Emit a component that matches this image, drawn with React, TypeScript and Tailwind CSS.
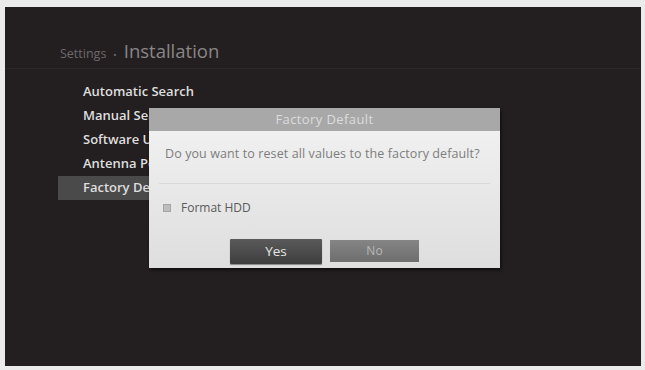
const menu = ['Automatic Search', 'Manual Search', 'Software Upgrade', 'Antenna Power', 'Factory Default']

export default function App() {
  return (
    <div className="w-[645px] h-[370px] bg-[#ebebeb] pl-[5px] pr-[4px] pt-[7px] pb-[4px] font-['Open_Sans',sans-serif]">
      <div className="relative w-full h-full bg-[#231f20] overflow-hidden">
        {/* header */}
        <div className="h-[62px] pl-[55px] pt-[30px] flex items-baseline gap-[7px] border-b border-[#2b2728]">
          <span className="text-[12.5px] text-[#6e6a6b]">Settings</span>
          <span className="text-[9px] text-[#6e6a6b]">•</span>
          <span className="text-[18.5px] text-[#8a8687]">Installation</span>
        </div>

        {/* menu */}
        <div className="pt-[11px] flex flex-col">
          {menu.map((item, i) => (
            <div
              key={item}
              className={
                'h-[24px] w-[300px] ml-[53px] pl-[25px] flex items-center text-[13px] font-semibold text-[#dedede] ' +
                (i === menu.length - 1 ? 'bg-[#4b4a4a]' : '')
              }
            >
              {item}
            </div>
          ))}
        </div>

        {/* dialog */}
        <div className="absolute left-[144px] top-[101px] w-[351px] h-[160px] bg-[#e1e1e1] flex flex-col shadow-[1px_2px_3px_rgba(0,0,0,0.6)]">
          <div className="h-[23px] bg-[#a8a8a8] flex items-center justify-center text-[13px] tracking-[0.4px] text-[#dcdcdc]">
            Factory Default
          </div>
          <div className="flex-1 bg-gradient-to-b from-[#f0f0f0] to-[#dedede] flex flex-col">
            <div className="mt-[14px] h-[18px] pl-[16px] flex items-center text-[12.5px] tracking-[0.1px] text-[#7d7d7d]">
              Do you want to reset all values to the factory default?
            </div>
            <div className="mx-[10px] mt-[20px] border-t border-[#dadada]" />
            <div className="mt-[16px] h-[16px] pl-[14px] flex items-center gap-[10px] text-[12px] text-[#5a5a5a]">
              <span className="w-[8px] h-[8px] bg-[#bdbdbd] border border-[#a5a5a5]" />
              Format HDD
            </div>
            <div className="mt-[23px] flex justify-center gap-[8px] items-start">
              <div className="w-[92px] h-[25px] bg-gradient-to-b from-[#5a5a5a] to-[#3e3e3e] flex items-center justify-center text-[13.5px] text-[#e6e6e6] rounded-[1px] shadow-[0_1px_1px_rgba(0,0,0,0.4)]">
                Yes
              </div>
              <div className="w-[89px] h-[22px] mt-[1px] bg-gradient-to-b from-[#858585] to-[#6e6e6e] flex items-center justify-center text-[12px] text-[#b8b8b8]">
                No
              </div>
            </div>
          </div>
        </div>
      </div>
    </div>
  )
}
